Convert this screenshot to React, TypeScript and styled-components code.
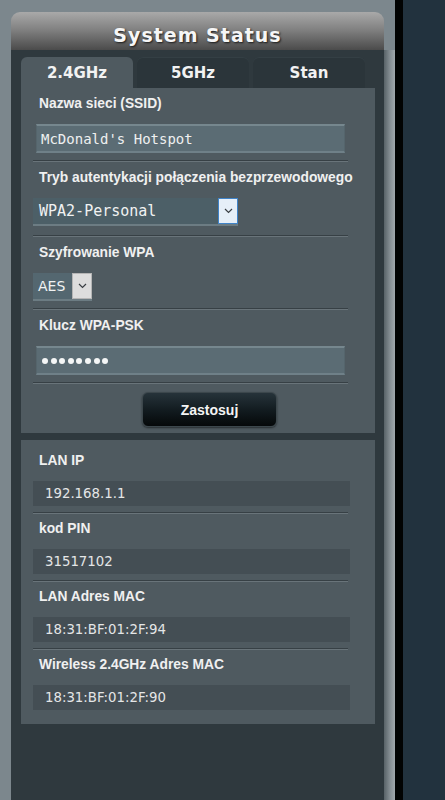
import React from 'react'
import styled, { createGlobalStyle } from 'styled-components'

const GlobalStyle = createGlobalStyle`
  html, body {
    margin: 0;
    padding: 0;
  }
  body {
    background: #22323e;
    font-family: "Liberation Sans", Arial, sans-serif;
  }
`

const Page = styled.div`
  display: flex;
  width: 445px;
  min-height: 800px;
  overflow: hidden;
`

const Side = styled.div`
  width: 395px;
  display: flex;
  padding: 12px 0 0 11px;
  box-sizing: border-box;
  background: #7c878d;
`

const Panel = styled.div`
  width: 373px;
  display: flex;
  flex-direction: column;
`

const Edge = styled.div`
  width: 11px;
  margin-top: 38px;
  background: linear-gradient(to right, #586267, #858e93 55%, #a0a8ac);
`

const Divider = styled.div`
  width: 8px;
  background: #020303;
`

const Navy = styled.div`
  flex: 1;
  background: #22323e;
`

const Header = styled.div`
  height: 38px;
  box-sizing: border-box;
  padding-top: 7px;
  border-radius: 9px 9px 0 0;
  background: linear-gradient(#a9a9a9, #828282 45%, #4b4b4b);
  display: flex;
  align-items: center;
  justify-content: center;
  font-family: "DejaVu Sans", Verdana, sans-serif;
  font-weight: bold;
  font-size: 19px;
  letter-spacing: 1px;
  color: #f6f6f6;
  text-shadow: 1px 1px 2px #1a1a1a;
`

const Body = styled.div`
  flex: 1;
  background: #2f393e;
  padding: 7px 9px 0 10px;
`

const Tabs = styled.div`
  display: flex;
  gap: 4px;
`

const Tab = styled.div<{ $active?: boolean }>`
  width: 112px;
  height: 31px;
  border-radius: 6px 6px 0 0;
  background: ${({ $active }) => ($active ? '#4f5a60' : '#2b353a')};
  box-shadow: ${({ $active }) => ($active ? 'none' : 'inset 0 1px 0 #343f44')};
  display: flex;
  align-items: center;
  justify-content: center;
  font-family: "DejaVu Sans", Verdana, sans-serif;
  font-weight: bold;
  font-size: 15px;
  color: #f2f2f2;
`

const Card = styled.div<{ $top: number; $bottom: number }>`
  background: #4f5a60;
  padding: ${({ $top, $bottom }) => `${$top}px 27px ${$bottom}px 12px`};
  & + & {
    margin-top: 7px;
  }
`

const Field = styled.div<{ $first?: boolean; $pb?: number }>`
  padding: ${({ $first }) => ($first ? '0' : '7px')} 0 ${({ $pb = 7 }) => $pb}px;
`

const Label = styled.div`
  margin: 0 0 12px 6px;
  line-height: 17px;
  font-weight: bold;
  font-size: 13.8px;
  white-space: nowrap;
  color: #f0f0f0;
`

const Rule = styled.div`
  border-top: 1px solid #374045;
  border-bottom: 1px solid #69747a;
`

const TextBox = styled.div`
  margin-left: 3px;
  width: 309px;
  height: 29px;
  box-sizing: border-box;
  background: #5b6c74;
  border-top: 2px solid #76878e;
  border-bottom: 2px solid #6f8088;
  border-left: 1px solid #55656c;
  border-right: 1px solid #55656c;
  display: flex;
  align-items: center;
  padding-left: 4px;
  font-family: "DejaVu Sans Mono", "Liberation Mono", monospace;
  font-size: 14px;
  color: #eef0f0;
`

const Dots = styled.div`
  display: flex;
  gap: 2.6px;
  padding-left: 1px;
`

const Dot = styled.span`
  width: 6px;
  height: 6px;
  border-radius: 50%;
  background: #f4f6f6;
`

const SelectBox = styled.div<{ $width: number }>`
  width: ${({ $width }) => $width}px;
  height: 28px;
  display: flex;
  box-sizing: border-box;
  border-bottom: 2px solid #6c7c83;
`

const SelectValue = styled.div<{ $mono?: boolean }>`
  flex: 1;
  background: ${({ $mono }) => ($mono ? '#4c5f67' : '#546770')};
  display: flex;
  align-items: center;
  padding-left: ${({ $mono }) => ($mono ? '6px' : '5px')};
  font-family: ${({ $mono }) =>
    $mono ? '"DejaVu Sans Mono", "Liberation Mono", monospace' : '"DejaVu Sans", Verdana, sans-serif'};
  font-size: ${({ $mono }) => ($mono ? '15px' : '14px')};
  color: #f0f2f2;
`

const SelectButton = styled.div<{ $focus?: boolean }>`
  width: 20px;
  box-sizing: border-box;
  background: ${({ $focus }) => ($focus ? '#e6eff8' : '#dddddd')};
  border: 1px solid ${({ $focus }) => ($focus ? '#3f83c8' : '#b5b5b5')};
  display: flex;
  align-items: center;
  justify-content: center;
`

const Chevron = () => (
  <svg width="9" height="6" viewBox="0 0 9 6">
    <path d="M1 1 L4.5 4.5 L8 1" fill="none" stroke="#3a3f44" strokeWidth="1.2" />
  </svg>
)

const ApplyButton = styled.div`
  margin: 8px 0 0 109px;
  width: 135px;
  height: 35px;
  box-sizing: border-box;
  border-radius: 6px;
  border: 1px solid #3c474c;
  background: linear-gradient(#26333a, #111a1e 55%, #050809);
  box-shadow: 0 1px 2px rgba(0, 0, 0, 0.5);
  display: flex;
  align-items: center;
  justify-content: center;
  font-weight: bold;
  font-size: 14px;
  color: #f4f4f4;
`

const InfoField = styled.div<{ $first?: boolean }>`
  padding: ${({ $first }) => ($first ? '0' : '6px')} 0 6px;
`

const ValueBox = styled.div`
  width: 317px;
  height: 25px;
  background: #444e54;
  display: flex;
  align-items: center;
  padding-left: 12px;
  box-sizing: border-box;
  font-family: "DejaVu Sans", Verdana, sans-serif;
  font-size: 13.3px;
  color: #e4e6e7;
`

const info = [
  { label: 'LAN IP', value: '192.168.1.1' },
  { label: 'kod PIN', value: '31517102' },
  { label: 'LAN Adres MAC', value: '18:31:BF:01:2F:94' },
  { label: 'Wireless 2.4GHz Adres MAC', value: '18:31:BF:01:2F:90' },
]

export default function App() {
  return (
    <>
      <GlobalStyle />
      <Page>
        <Side>
          <Panel>
            <Header>System Status</Header>
            <Body>
              <Tabs>
                <Tab $active>2.4GHz</Tab>
                <Tab>5GHz</Tab>
                <Tab>Stan</Tab>
              </Tabs>
              <Card $top={7} $bottom={6}>
                <Field $first>
                  <Label>Nazwa sieci (SSID)</Label>
                  <TextBox>McDonald's Hotspot</TextBox>
                </Field>
                <Rule />
                <Field $pb={9}>
                  <Label>Tryb autentykacji połączenia bezprzewodowego</Label>
                  <SelectBox $width={205}>
                    <SelectValue $mono>WPA2-Personal</SelectValue>
                    <SelectButton $focus>
                      <Chevron />
                    </SelectButton>
                  </SelectBox>
                </Field>
                <Rule />
                <Field>
                  <Label>Szyfrowanie WPA</Label>
                  <SelectBox $width={59}>
                    <SelectValue>AES</SelectValue>
                    <SelectButton>
                      <Chevron />
                    </SelectButton>
                  </SelectBox>
                </Field>
                <Rule />
                <Field>
                  <Label>Klucz WPA-PSK</Label>
                  <TextBox>
                    <Dots>
                      {Array.from({ length: 8 }).map((_, i) => (
                        <Dot key={i} />
                      ))}
                    </Dots>
                  </TextBox>
                </Field>
                <Rule />
                <ApplyButton>Zastosuj</ApplyButton>
              </Card>
              <Card $top={12} $bottom={8}>
                {info.map((item, i) => (
                  <React.Fragment key={item.label}>
                    {i > 0 && <Rule />}
                    <InfoField $first={i === 0}>
                      <Label>{item.label}</Label>
                      <ValueBox>{item.value}</ValueBox>
                    </InfoField>
                  </React.Fragment>
                ))}
              </Card>
            </Body>
          </Panel>
          <Edge />
        </Side>
        <Divider />
        <Navy />
      </Page>
    </>
  )
}
